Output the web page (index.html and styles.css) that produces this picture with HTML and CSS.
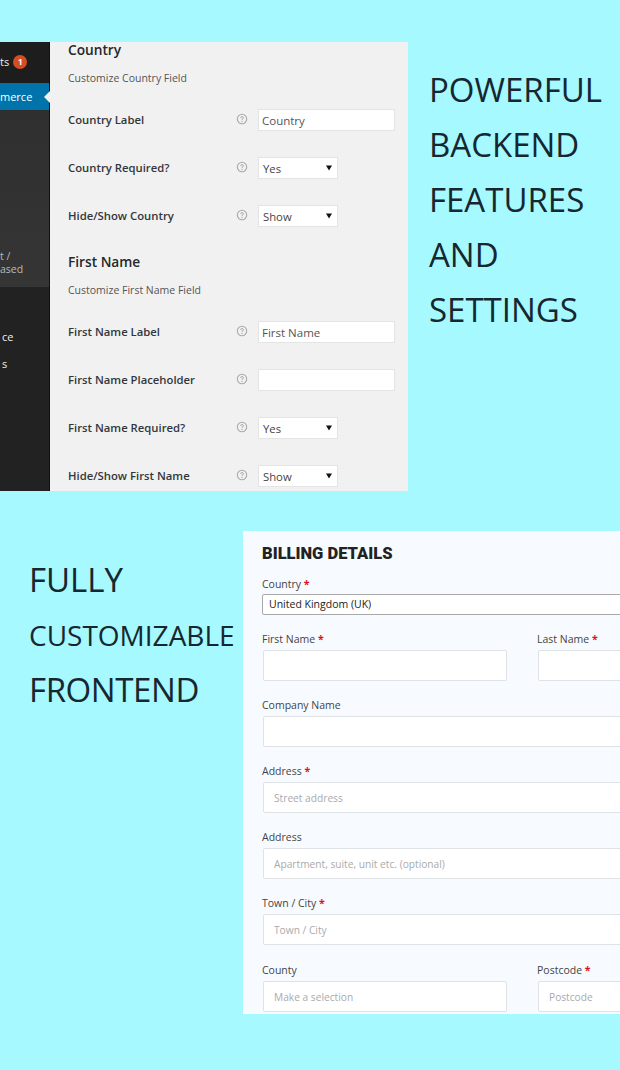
FILE: index.html
```html
<!DOCTYPE html>
<html lang="en">
<head>
<meta charset="utf-8">
<title>Checkout field settings</title>
<link rel="stylesheet" href="styles.css">
</head>
<body>
<svg class="defs" width="0" height="0" aria-hidden="true">
  <symbol id="help" viewBox="0 0 12 12">
    <circle cx="6" cy="6" r="4.7" fill="none" stroke="#a9a9a9" stroke-width="1.1"/>
    <path d="M4.6 4.9c0-.8.6-1.3 1.4-1.3s1.4.5 1.4 1.2c0 1.1-1.4 1.1-1.4 2.2" fill="none" stroke="#a9a9a9" stroke-width="1"/>
    <circle cx="6" cy="8.4" r=".6" fill="#a9a9a9"/>
  </symbol>
  <symbol id="caret" viewBox="0 0 6 6"><path d="M0 .5h6L3 5.5z" fill="#111"/></symbol>
</svg>
<main class="page">
  <section class="top">
    <div class="admin">
      <nav class="side">
        <div class="side-comments"><span>ts</span><b class="badge">1</b></div>
        <div class="side-active"><span>merce</span></div>
        <div class="side-sub">
          <span>t /</span>
          <span>ased</span>
        </div>
        <div class="side-rest">
          <span>ce</span>
          <span>s</span>
        </div>
      </nav>
      <div class="settings">
        <h3 class="set-title set-first">Country</h3>
        <p class="set-desc">Customize Country Field</p>
        <div class="set-row"><label>Country Label</label><svg class="help"><use href="#help"/></svg><input class="text-in" value="Country"></div>
        <div class="set-row"><label>Country Required?</label><svg class="help"><use href="#help"/></svg><div class="sel"><span>Yes</span><svg class="caret"><use href="#caret"/></svg></div></div>
        <div class="set-row"><label>Hide/Show Country</label><svg class="help"><use href="#help"/></svg><div class="sel"><span>Show</span><svg class="caret"><use href="#caret"/></svg></div></div>
        <h3 class="set-title">First Name</h3>
        <p class="set-desc">Customize First Name Field</p>
        <div class="set-row"><label>First Name Label</label><svg class="help"><use href="#help"/></svg><input class="text-in" value="First Name"></div>
        <div class="set-row"><label>First Name Placeholder</label><svg class="help"><use href="#help"/></svg><input class="text-in" value=""></div>
        <div class="set-row"><label>First Name Required?</label><svg class="help"><use href="#help"/></svg><div class="sel"><span>Yes</span><svg class="caret"><use href="#caret"/></svg></div></div>
        <div class="set-row"><label>Hide/Show First Name</label><svg class="help"><use href="#help"/></svg><div class="sel"><span>Show</span><svg class="caret"><use href="#caret"/></svg></div></div>
      </div>
    </div>
    <h2 class="headline headline-top">
      <span>POWERFUL</span><span>BACKEND</span><span>FEATURES</span><span>AND</span><span>SETTINGS</span>
    </h2>
  </section>
  <section class="bottom">
    <h2 class="headline headline-bottom">
      <span>FULLY</span><span class="small">CUSTOMIZABLE</span><span class="tight">FRONTEND</span>
    </h2>
    <form class="billing">
      <h3 class="bill-title">BILLING DETAILS</h3>
      <div class="field field-country">
        <label>Country <i>*</i></label>
        <div class="country-box">United Kingdom (UK)</div>
      </div>
      <div class="split">
        <div class="field"><label>First Name <i>*</i></label><input class="bill-in"></div>
        <div class="field"><label>Last Name <i>*</i></label><input class="bill-in"></div>
      </div>
      <div class="field"><label>Company Name</label><input class="bill-in"></div>
      <div class="field"><label>Address <i>*</i></label><input class="bill-in" placeholder="Street address"></div>
      <div class="field"><label>Address</label><input class="bill-in" placeholder="Apartment, suite, unit etc. (optional)"></div>
      <div class="field"><label>Town / City <i>*</i></label><input class="bill-in" placeholder="Town / City"></div>
      <div class="split split-last">
        <div class="field"><label>County</label><input class="bill-in" placeholder="Make a selection"></div>
        <div class="field"><label>Postcode <i>*</i></label><input class="bill-in" placeholder="Postcode"></div>
      </div>
    </form>
  </section>
</main>
</body>
</html>
```

FILE: styles.css
```css
* { box-sizing: border-box; }
html, body { margin: 0; padding: 0; }
body {
  width: 620px;
  height: 1070px;
  overflow: hidden;
  background: #a5f9ff;
  font-family: "Open Sans", "Liberation Sans", sans-serif;
}
.defs { display: block; height: 0; }
.page { display: flex; flex-direction: column; width: 620px; }

.top { display: flex; padding-top: 42px; height: 491px; }
.admin { display: flex; flex: none; width: 408px; height: 449px; }

.side {
  width: 50px;
  flex: none;
  display: flex;
  flex-direction: column;
  background: #222;
  border-right: 1px solid #111;
  color: #eee;
  font-size: 11px;
}
.side-comments {
  height: 41px;
  display: flex;
  align-items: center;
  gap: 4px;
  padding-bottom: 2px;
  background: #1d1d1d;
}
.badge {
  width: 14px;
  height: 14px;
  border-radius: 50%;
  background: #d54e21;
  color: #fff;
  font-size: 8px;
  line-height: 14px;
  text-align: center;
}
.side-active {
  height: 27px;
  position: relative;
  display: flex;
  align-items: center;
  background: #0073aa;
  color: #fff;
}
.side-active::after {
  content: "";
  position: absolute;
  right: -1px;
  top: 8px;
  border: 6px solid transparent;
  border-left: 0;
  border-right-color: #f1f1f1;
}
.side-sub {
  height: 177px;
  display: flex;
  flex-direction: column;
  justify-content: flex-end;
  padding-bottom: 11px;
  background: linear-gradient(#2f2f2f, #353535);
  color: #b9b9b9;
  font-size: 10.5px;
  line-height: 13px;
}
.side-rest {
  flex: 1;
  display: flex;
  flex-direction: column;
  gap: 12px;
  padding: 42px 0 0 2px;
  line-height: 15px;
  background: #222;
}

.settings {
  flex: 1;
  min-width: 0;
  background: #f1f1f1;
  padding-left: 18px;
  color: #32373c;
}
.set-title {
  margin: 0;
  padding-top: 13px;
  font-size: 13.7px;
  line-height: 19px;
  font-weight: 600;
  color: #23282d;
}
.set-first { padding-top: 0; padding-bottom: 2px; line-height: 15px; }
.set-desc {
  margin: 0;
  padding-top: 12px;
  padding-bottom: 9px;
  font-size: 10.5px;
  line-height: 15px;
  color: #555;
}
.set-row {
  display: grid;
  grid-template-columns: 168px 22px auto;
  align-items: center;
  justify-content: start;
  height: 48px;
}
.set-row label { font-size: 11.3px; font-weight: 600; }
.help { width: 12px; height: 12px; margin-top: -1px; }
.text-in {
  width: 137px;
  height: 22px;
  margin-top: 2px;
  padding: 0 3px;
  border: 1px solid #e4e4e4;
  background: #fff;
  font: 11.5px "Open Sans", sans-serif;
  color: #555;
  outline: 0;
}
.sel {
  width: 80px;
  height: 22px;
  margin-top: 2px;
  display: flex;
  align-items: center;
  justify-content: space-between;
  padding: 0 5px 0 4px;
  border: 1px solid #e4e4e4;
  background: #fff;
  font-size: 11.3px;
  color: #444;
}
.caret { width: 6px; height: 6px; }

.headline {
  margin: 0;
  display: flex;
  flex-direction: column;
  font-weight: 400;
  color: #16272f;
}
.headline-top {
  padding: 20px 0 0 21px;
  font-size: 33px;
  line-height: 55px;
}
.headline-top span { display: block; }
.bottom { display: flex; padding-top: 40px; }
.headline-bottom {
  width: 243px;
  flex: none;
  padding: 21px 0 0 29px;
  font-size: 33px;
  line-height: 55px;
}
.headline-bottom .small { font-size: 28px; padding-top: 1px; margin-bottom: -1px; }
.headline-bottom .tight { letter-spacing: -.4px; }

.billing {
  width: 377px;
  height: 483px;
  overflow: hidden;
  background: #f7fbff;
  padding: 13px 0 0 19px;
}
.bill-title {
  margin: 0;
  font-family: Roboto, "Liberation Sans", sans-serif;
  font-size: 16.5px;
  line-height: 20px;
  font-weight: 900;
  color: #222;
}
.field { display: flex; flex-direction: column; width: 519px; padding-top: 17px; }
.field label {
  font-size: 10.5px;
  line-height: 14px;
  height: 18px;
  color: #444;
}
.field label i { font-style: normal; font-weight: 700; color: #e01020; }
.field-country { padding-top: 13px; }
.field-country label { height: 17px; }
.country-box {
  height: 21px;
  padding-left: 6px;
  border: 1px solid #a9a9a9;
  border-radius: 2px;
  background: #fff;
  font-size: 10.5px;
  line-height: 19px;
  color: #222;
}
.split { display: grid; grid-template-columns: 245px 245px; column-gap: 30px; width: 520px; }
.split-last { padding-top: 1px; }
.split .field { width: auto; }
.bill-in {
  width: calc(100% - 1px);
  height: 31px;
  margin-left: 1px;
  padding: 0 10px;
  border: 1px solid #e0e3e6;
  border-radius: 2px;
  background: #fff;
  font: 10.2px "Open Sans", sans-serif;
  outline: 0;
}
.bill-in::placeholder { color: #aaa; opacity: 1; }
```
